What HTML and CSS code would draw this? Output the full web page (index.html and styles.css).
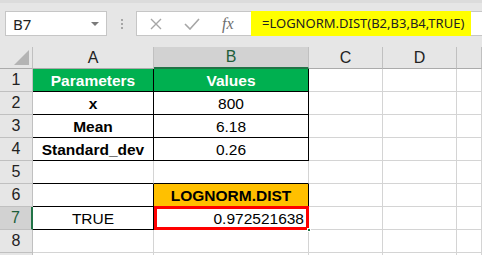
FILE: index.html
```html
<!DOCTYPE html>
<html lang="en">
<head>
  <meta charset="UTF-8">
  <title>LOGNORM.DIST</title>
  <link rel="stylesheet" href="styles.css">
</head>
<body>
  <div class="toolbar">
    <div class="namebox">
      <span>B7</span>
      <span class="caret"></span>
    </div>
    <div class="grip"><i></i><i></i><i></i></div>
    <div class="formula">
      <div class="fbtns">
        <svg class="ico-x" width="12" height="12" viewBox="0 0 12 12"><path d="M1 1 L11 11 M11 1 L1 11" stroke="#a6a6a6" stroke-width="1.4" fill="none"/></svg>
        <svg class="ico-ok" width="16" height="12" viewBox="0 0 16 12"><path d="M1 6 L6 11 L15 1" stroke="#a6a6a6" stroke-width="1.6" fill="none"/></svg>
        <span class="fx">fx</span>
      </div>
      <div class="ftext">=LOGNORM.DIST(B2,B3,B4,TRUE)</div>
    </div>
  </div>

  <div class="sheet">
    <div class="corner"><span class="tri"></span></div>
    <div class="ch">A</div>
    <div class="ch sel">B</div>
    <div class="ch">C</div>
    <div class="ch">D</div>
    <div class="ch"></div>

    <div class="rh">1</div>
    <div class="c green bold mid br bb">Parameters</div>
    <div class="c green bold mid br bb">Values</div>
    <div class="c"></div>
    <div class="c"></div>
    <div class="c"></div>

    <div class="rh">2</div>
    <div class="c bold mid br bb">x</div>
    <div class="c mid br bb">800</div>
    <div class="c"></div>
    <div class="c"></div>
    <div class="c"></div>

    <div class="rh">3</div>
    <div class="c bold mid br bb">Mean</div>
    <div class="c mid br bb">6.18</div>
    <div class="c"></div>
    <div class="c"></div>
    <div class="c"></div>

    <div class="rh">4</div>
    <div class="c bold mid br bb">Standard_dev</div>
    <div class="c mid br bb">0.26</div>
    <div class="c"></div>
    <div class="c"></div>
    <div class="c"></div>

    <div class="rh">5</div>
    <div class="c bb"></div>
    <div class="c bb"></div>
    <div class="c"></div>
    <div class="c"></div>
    <div class="c"></div>

    <div class="rh">6</div>
    <div class="c br bb"></div>
    <div class="c orange bold mid br bb">LOGNORM.DIST</div>
    <div class="c"></div>
    <div class="c"></div>
    <div class="c"></div>

    <div class="rh sel">7</div>
    <div class="c mid br bb">TRUE</div>
    <div class="c right br bb active">0.972521638<span class="handle"></span></div>
    <div class="c"></div>
    <div class="c"></div>
    <div class="c"></div>

    <div class="rh">8</div>
    <div class="c"></div>
    <div class="c"></div>
    <div class="c"></div>
    <div class="c"></div>
    <div class="c"></div>

    <div class="rh"></div>
    <div class="c"></div>
    <div class="c"></div>
    <div class="c"></div>
    <div class="c"></div>
    <div class="c"></div>
  </div>
</body>
</html>
```

FILE: styles.css
```css
* {
  box-sizing: border-box;
}
body {
  margin: 0;
  width: 482px;
  height: 255px;
  overflow: hidden;
  background: #e6e6e6;
  font-family: "Liberation Sans", Arial, sans-serif;
  color: #000;
}
.toolbar {
  display: flex;
  align-items: center;
  height: 47px;
  padding: 8px 0 11px 5px;
  border-top: 3px solid #dcdcdc;
}
.namebox {
  display: flex;
  align-items: center;
  justify-content: space-between;
  width: 102px;
  height: 25px;
  background: #fff;
  border: 1px solid #c6c6c6;
  padding: 0 7px;
  font-family: "Noto Sans", sans-serif;
  font-size: 15px;
  color: #222;
}
.caret {
  width: 0;
  height: 0;
  border-left: 4px solid transparent;
  border-right: 4px solid transparent;
  border-top: 4px solid #7a7a7a;
}
.grip {
  display: flex;
  flex-direction: column;
  gap: 2px;
  margin: 0 13px 0 14px;
}
.grip i {
  display: block;
  width: 2px;
  height: 2px;
  background: #a6a6a6;
}
.formula {
  flex: 1;
  display: flex;
  align-items: stretch;
  height: 25px;
  background: #fff;
  border: 1px solid #c6c6c6;
  border-right: none;
}
.fbtns {
  display: flex;
  align-items: center;
  width: 114px;
  padding-left: 13px;
}
.ico-ok {
  margin-left: 22px;
}
.fx {
  margin-left: 22px;
  font-family: "Liberation Serif", serif;
  font-style: italic;
  font-size: 16px;
  color: #6e6e6e;
}
.ftext {
  margin-top: -1px;
  height: 25px;
  width: 220px;
  background: #ffff00;
  padding-left: 11px;
  line-height: 24px;
  font-family: "Noto Sans", sans-serif;
  font-size: 13px;
  color: #222;
  white-space: nowrap;
}
.sheet {
  display: grid;
  grid-template-columns: 33px 121px 155px 74px 74px 1fr;
  grid-template-rows: 22px;
  grid-auto-rows: 23px;
  height: 208px;
  overflow: hidden;
  background: #fff;
}
.corner {
  position: relative;
  background: #e6e6e6;
  border-right: 1px solid #c0c0c0;
  border-bottom: 1px solid #ababab;
}
.tri {
  position: absolute;
  right: 3px;
  bottom: 3px;
  width: 0;
  height: 0;
  border-left: 15px solid transparent;
  border-bottom: 15px solid #b4b4b4;
}
.ch {
  display: flex;
  align-items: center;
  justify-content: center;
  background: #e6e6e6;
  border-right: 1px solid #c0c0c0;
  border-bottom: 1px solid #ababab;
  font-size: 16px;
  color: #222;
}
.ch.sel {
  background: #d2d2d2;
  border-bottom: 2px solid #217346;
  color: #1e5e3a;
}
.rh {
  display: flex;
  align-items: center;
  justify-content: center;
  background: #e6e6e6;
  border-right: 1px solid #c0c0c0;
  border-bottom: 1px solid #c0c0c0;
  font-size: 16px;
  color: #222;
}
.rh.sel {
  background: #d2d2d2;
  border-right: 2px solid #217346;
  color: #1e5e3a;
}
.c {
  display: flex;
  align-items: center;
  padding: 1px 4px 0;
  border-right: 1px solid #d4d4d4;
  border-bottom: 1px solid #d4d4d4;
  font-size: 15.5px;
  white-space: nowrap;
}
.mid {
  justify-content: center;
}
.right {
  justify-content: flex-end;
}
.bold {
  font-weight: bold;
}
.br {
  border-right-color: #000;
}
.bb {
  border-bottom-color: #000;
}
.green {
  background: #00b050;
  color: #fff;
}
.orange {
  background: #ffc000;
}
.active {
  position: relative;
}
.active::before {
  content: "";
  position: absolute;
  left: 0;
  top: -1px;
  right: -1px;
  bottom: -1px;
  border: 3px solid #ff0000;
}
.handle {
  position: absolute;
  right: -3px;
  bottom: -3px;
  width: 4px;
  height: 4px;
  background: #217346;
  border: 1px solid #fff;
}
```
